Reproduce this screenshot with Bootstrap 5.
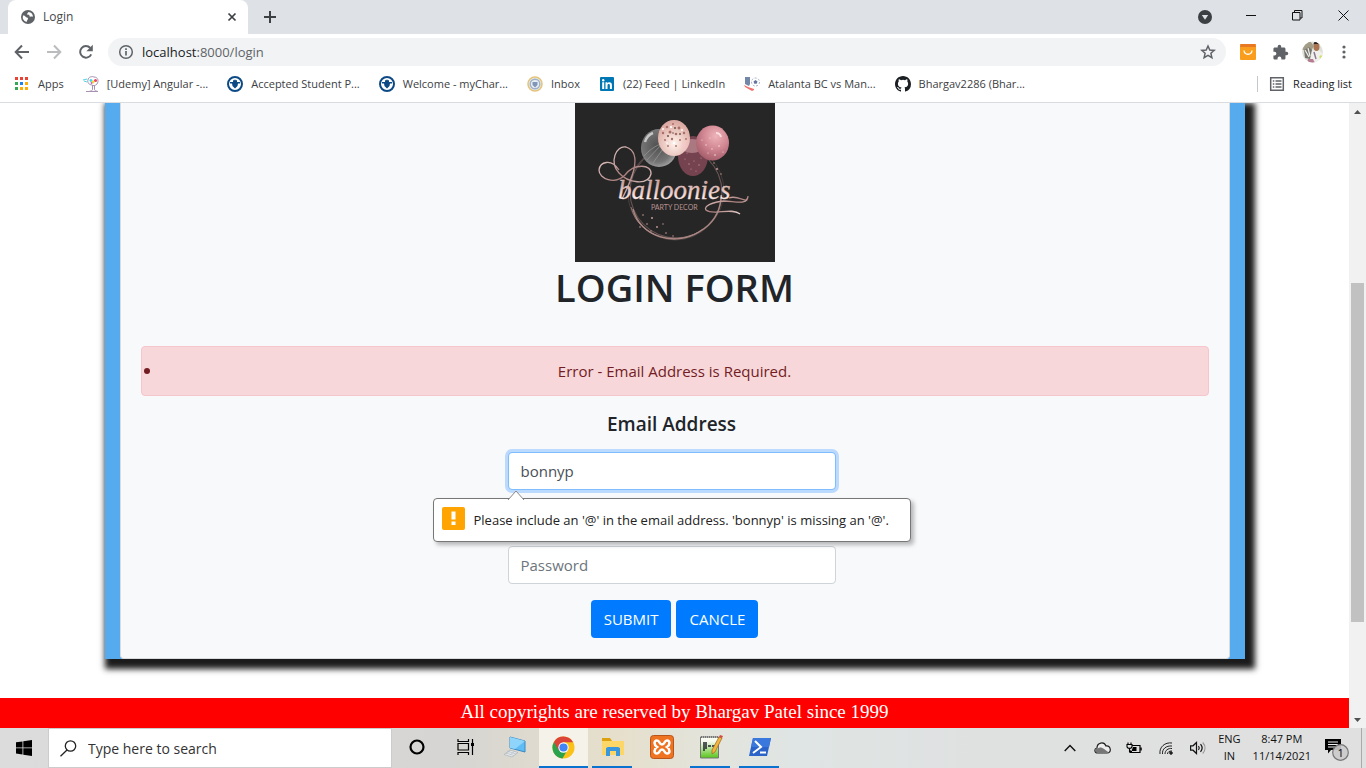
<!DOCTYPE html>
<html lang="en">
<head>
<meta charset="utf-8">
<meta name="viewport" content="width=device-width, initial-scale=1">
<title>Login</title>
<link href="https://cdn.jsdelivr.net/npm/bootstrap@5.3.0/dist/css/bootstrap.min.css" rel="stylesheet">
<style>
  body { font-family: "Open Sans", "Noto Sans", sans-serif; font-size: 15px; line-height: 24px; color: #212529; }
  svg { display: block; flex: none; }
  button.plain { border: 0; background: none; padding: 0; }

  /* browser frame */
  .tabstrip { background: #dee1e6; height: 34px; font-size: 12px; }
  .page-tab { width: 240px; margin-left: 8px; background: #fff; border-radius: 8px 8px 0 0; padding: 0 10px 0 13px; color: #45494d; }
  .caption-btn { width: 46px; height: 30px; display: grid; place-items: center; }
  .toolbar { height: 36px; padding: 0 6px; }
  .tool-btn { width: 32px; height: 32px; display: grid; place-items: center; }
  .omnibox { height: 28px; background: #f1f3f4; border-radius: 14px; padding: 0 10px; margin: 0 6px; }
  .url { font-size: 13px; color: #5f6368; text-decoration: none; }
  .url span { color: #202124; }
  .bookmarks { height: 33px; padding: 0 14px 5px; gap: 19px; border-bottom: 1px solid #dadce0; font-size: 11px; }
  .bookmarks a { color: #3c4043; text-decoration: none; display: flex; align-items: center; gap: 8px; white-space: nowrap; }
  .bookmarks .reading { border-left: 1px solid #c4c7cb; padding-left: 11px; color: #202124; height: 16px; }

  /* page */
  .page-view { min-height: 0; }
  .frame { background: #55abee; padding: 0 15px; box-shadow: 5px 5px 6px 5px #1b1b1b; }
  .login-card { background: #f8f9fb; border: 1px solid #d9dbde; border-top: 0; border-radius: 0 0 4px 4px; padding: 0 20px 20px; }
  .title { font-size: 38px; font-weight: 600; line-height: 48px; margin: 1px 0 35px; }
  .error-list { background: #f8d7da; border: 1px solid #f5c6cb; border-radius: 4px; color: #721c24; padding: 12px 0; margin: 0 0 16px; }
  .error-list .dot { width: 6px; height: 6px; border-radius: 50%; background: #721c24; margin: 0 -8px 0 2px; }
  .fields { padding-right: 6px; }
  .field-box { width: 328px; max-width: 100%; }
  .field-label { font-size: 19px; font-weight: 600; line-height: 24px; }
  .field-box .form-control { height: 38px; border-radius: 4px; border-color: #ced4da; color: #495057; font-size: 15px; }
  .field-box .form-control::placeholder { color: #6c757d; }
  .field-box .is-active { border-color: #80bdff; box-shadow: 0 0 0 3px #bbdafd; }
  .pass-gap { margin-top: 56px; }
  .btn-blue { background: #007bff; color: #fff; height: 38px; border-radius: 4px; font-size: 15px; padding: 0 13px; }
  .btn-row { gap: 5px; }
  .hint { position: absolute; top: 46px; left: 50%; transform: translateX(-50%); width: 478px; height: 44px; padding: 0 8px 4px; background: #fff; border: 1px solid #777; border-radius: 4px; box-shadow: 3px 3px 4px #0004; font-size: 13px; color: #222; white-space: nowrap; gap: 9px; z-index: 2; }
  .hint-arrow { position: absolute; left: 73px; top: -9px; }
  .copyright { background: #f00; color: #fff; font: 19px/28px "Liberation Serif", "Times New Roman", serif; margin-top: 39px; height: 30px; }

  .scrollbar { width: 17px; background: #f1f1f1; }
  .scrollbar .arrow { height: 17px; display: grid; place-items: center; }
  .thumb { background: #c1c1c1; width: 13px; flex: 339 1 0; }
  .track-above { flex: 163 1 0; }
  .track-below { flex: 89 1 0; }

  /* taskbar */
  .taskbar { height: 40px; background: linear-gradient(90deg, #dcdcdc 0, #d6d5d3 33%, #e6dfcb 45%, #e3e4dc 52%, #dfe5e4 58%, #dfe0e0 75%, #e0e0e0 100%); }
  .start { width: 48px; display: grid; place-items: center; }
  .search { width: 344px; background: #fff; border: 1px solid #ccc; padding-left: 11px; gap: 11px; }
  .search input { border: 0; outline: 0; font-size: 14px; color: #333; width: 240px; padding: 2px 0 0; }
  .search input::placeholder { color: #333; opacity: 1; }
  .task { width: 49px; display: grid; place-items: center; border: 0; background: none; padding: 0 0 2px; position: relative; }
  .task.open::after { content: ""; position: absolute; left: 4px; right: 5px; bottom: 0; height: 2px; background: #0a73d0; }
  .task.front { background: #f5f2ea; }
  .task.front::after { left: 0; right: 0; }
  .tray-btn { width: 32px; display: grid; place-items: center; }
  .tray-text { font-size: 11px; line-height: 17px; color: #111; text-align: center; padding-top: 2px; }
  .show-desktop { width: 5px; border-left: 1px solid #aaa; }
</style>
</head>
<body>
<div class="vh-100 d-flex flex-column overflow-hidden">

  <header>
    <div class="tabstrip d-flex">
      <div class="page-tab d-flex align-items-center">
        <svg width="14" height="14" viewBox="0 0 14 14"><circle cx="7" cy="7" r="7" fill="#5f6368"/><path d="M2 5.500c1.500 0 2 .3 2.600 1.300.6.900 2.200.5 2.400 1.700.1 1-.9 1.300-1 2.500-.1.800-.5 1-1 .8A5.500 5.500 0 0 1 2 5.500zM7.500 2c-.3 1-1.400 1-1.300 2 .1.900 1.500.4 2 .9.500.6 0 1.500.9 1.700 1 .2 2.200-.4 2.900.4a5.300 5.300 0 0 0-4.500-5z" fill="#fff"/></svg>
        <span class="ms-2">Login</span>
        <button class="plain ms-auto" aria-label="Close tab"><svg width="12" height="12" viewBox="0 0 12 12"><path d="M2.500 2.500l7 7M9.500 2.500l-7 7" stroke="#3c4043" stroke-width="1.700"/></svg></button>
      </div>
      <button class="plain ms-3" aria-label="New tab"><svg width="12" height="12" viewBox="0 0 12 12"><path d="M6 0v12M0 6h12" stroke="#3c4043" stroke-width="2"/></svg></button>
      <div class="ms-auto d-flex">
        <button class="plain me-3" aria-label="Search tabs"><svg width="14" height="14" viewBox="0 0 14 14"><circle cx="7" cy="7" r="7" fill="#3c4043"/><path d="M3.800 5h6.400L7 9.800z" fill="#dee1e6"/></svg></button>
        <button class="plain caption-btn" aria-label="Minimize"><svg width="10" height="10"><path d="M0 5.500h10" stroke="#111"/></svg></button>
        <button class="plain caption-btn" aria-label="Restore"><svg width="11" height="11"><path d="M.5 2.500h7.500v7.500H.5zM2.500 2.500V.5h7.500v7.500H8" fill="none" stroke="#111"/></svg></button>
        <button class="plain caption-btn" aria-label="Close"><svg width="11" height="11"><path d="M.5.5l10 10M10.500.5l-10 10" stroke="#111"/></svg></button>
      </div>
    </div>

    <div class="toolbar d-flex align-items-center">
      <button class="plain tool-btn" aria-label="Back"><svg width="16" height="16" viewBox="0 0 16 16" fill="none" stroke="#5f6368" stroke-width="2"><path d="M15 8H2M8 1.500L1.700 8 8 14.500"/></svg></button>
      <button class="plain tool-btn" aria-label="Forward"><svg width="16" height="16" viewBox="0 0 16 16" fill="none" stroke="#babcbe" stroke-width="2"><path d="M1 8h13M8 1.500L14.300 8 8 14.500"/></svg></button>
      <button class="plain tool-btn" aria-label="Reload"><svg width="16" height="16" viewBox="0 0 16 16"><path d="M13.200 10.300A5.800 5.800 0 1 1 12.300 4" fill="none" stroke="#5f6368" stroke-width="2"/><path d="M14.800.8v6.400H8.400z" fill="#5f6368"/></svg></button>
      <div class="omnibox flex-grow-1 d-flex align-items-center">
        <svg width="16" height="16" viewBox="0 0 16 16"><circle cx="8" cy="8" r="6.300" fill="none" stroke="#5f6368" stroke-width="1.500"/><path d="M8 7v4.500M8 4.300v1.700" stroke="#5f6368" stroke-width="1.700"/></svg>
        <a class="url ms-2" href="#"><span>localhost</span>:8000/login</a>
        <svg class="ms-auto" width="16" height="16" viewBox="0 0 16 16"><path d="M8 2l1.800 4 4.400.4-3.300 2.900 1 4.300L8 11.300l-3.900 2.300 1-4.300L1.800 6.400 6.200 6z" fill="none" stroke="#5f6368" stroke-width="1.500"/></svg>
      </div>
      <button class="plain tool-btn" aria-label="Shopping extension"><svg width="16" height="16" viewBox="0 0 16 16"><path d="M0 0h16v15a1 1 0 0 1-1 1H1a1 1 0 0 1-1-1z" fill="#f99d1c"/><path d="M1 0h14l1 3H0z" fill="#e87824"/><path d="M4 6.500c.5 5 7.500 5 8 0" fill="none" stroke="#fff" stroke-width="1.300"/></svg></button>
      <button class="plain tool-btn" aria-label="Extensions"><svg width="17" height="17" viewBox="0 0 24 24" fill="#5f6368"><path d="M20.500 11H19V7c0-1.100-.9-2-2-2h-4V3.500a2.500 2.500 0 0 0-5 0V5H4c-1.100 0-2 .9-2 2v3.800h1.500a2.700 2.700 0 0 1 0 5.400H2V20c0 1.100.9 2 2 2h3.800v-1.500a2.700 2.700 0 0 1 5.400 0V22H17c1.100 0 2-.9 2-2v-4h1.500a2.500 2.500 0 0 0 0-5z"/></svg></button>
      <button class="plain tool-btn" aria-label="Profile">
        <svg width="21" height="22" viewBox="0 0 21 22"><clipPath id="av"><circle cx="10.500" cy="11" r="10.400"/></clipPath><g clip-path="url(#av)"><path fill="#dfe0da" d="M0 0h21v22H0z"/><path fill="#a39c86" d="M0 3l8-3 4 5-3 5-9-1z"/><path d="M2 9l5-3 3 3-2 9-5-1z" fill="#77766c"/><path d="M3 9l4 7M6 7l2 8" stroke="#eee" stroke-width="1.200"/><path fill="#f2f0ec" d="M10 10l6-2 5 5v9H8z"/><ellipse cx="14.500" cy="6" rx="3" ry="4" fill="#a9744f"/><path d="M11.500 4c0-5 6-4 6 0l-1-1h-4z" fill="#2b211d"/><path d="M12 11l2 7" stroke="#8a7b94" stroke-width="1.500"/><circle cx="19" cy="16" r="1.700" fill="#cde06a"/><path d="M6 18h5l2 4H5z" fill="#b57c93"/></g></svg></button>
      <button class="plain tool-btn" aria-label="Menu"><svg width="4" height="14" fill="#5f6368"><circle cx="2" cy="2" r="1.600"/><circle cx="2" cy="7" r="1.600"/><circle cx="2" cy="12" r="1.600"/></svg></button>
    </div>

    <nav class="bookmarks d-flex align-items-center" aria-label="Bookmarks">
      <a href="#"><svg width="16" height="16" viewBox="0 0 16 16"><path fill="#ea4335" d="M1 1h3v3H1zM6 1h3v3H6zM11 1h3v3h-3z"/><path fill="#34a853" d="M1 6h3v3H1zM1 11h3v3H1z"/><path fill="#1a83f0" d="M6 6h3v3H6z"/><path fill="#fbaf05" d="M11 6h3v3h-3zM6 11h3v3H6zM11 11h3v3h-3z"/></svg>Apps</a>
      <a href="#"><svg width="16" height="16" viewBox="0 0 16 16"><path d="M5 4C5 1 9 0 11 1c4 0 5 4 3 7-2 2-4 2-5 1C6 9 4 6 5 4zM9.500 9v4.500c0 1-1 1.500-3 1.800M11.500 9v4.500c0 1 1 1.500 3 1.800M3 15.500h12" fill="none" stroke="#a791b0"/><circle cx="8" cy="4.500" r="1.500" fill="#48d7e6"/><circle cx="12.500" cy="4.500" r="1.600" fill="#ee4564"/><circle cx="10" cy="6" r="1.500" fill="#ffd836"/><circle cx="8.500" cy="7" r="1" fill="#bd65cf"/><path d="M0 4l4-1M1 5l3 1" stroke="#48d7e6"/></svg>[Udemy] Angular -...</a>
      <a href="#"><svg width="16" height="16" viewBox="0 0 16 16"><circle cx="8" cy="8" r="7" fill="#fff" stroke="#0d4a85" stroke-width="2"/><path d="M3 6h3V4.300h1.300L8 3.200l.7 1.100H10V6h3v1.500h-2L10.500 10 8 12.500 5.500 10 5 7.500H3z" fill="#0d4a85"/></svg>Accepted Student P...</a>
      <a href="#"><svg width="16" height="16" viewBox="0 0 16 16"><circle cx="8" cy="8" r="7" fill="#fff" stroke="#0d4a85" stroke-width="2"/><path d="M3 6h3V4.300h1.300L8 3.200l.7 1.100H10V6h3v1.500h-2L10.500 10 8 12.500 5.500 10 5 7.500H3z" fill="#0d4a85"/></svg>Welcome - myChar...</a>
      <a href="#"><svg width="16" height="16" viewBox="0 0 16 16"><circle cx="8" cy="8" r="7" fill="#e8edf2" stroke="#e5c47a" stroke-width="1.600"/><circle cx="8" cy="8" r="4.800" fill="none" stroke="#9fb1ca" stroke-width="1.400"/><path d="M5.500 6h5v3L8 11.500 5.500 9z" fill="#8096b8"/></svg>Inbox</a>
      <a href="#"><svg width="16" height="16" viewBox="0 0 16 16"><rect x="1" y="1" width="14" height="14" rx="1" fill="#0077b5"/><path d="M3.200 6.300h2V13h-2zM6.500 6.300h1.900v1c.9-1.700 4.500-1.600 4.500 1.500V13h-2V9.400c0-2-2.400-1.900-2.400 0V13h-2z" fill="#fff"/><circle cx="4.200" cy="4.200" r="1.200" fill="#fff"/></svg>(22) Feed | LinkedIn</a>
      <a href="#"><svg width="16" height="16" viewBox="0 0 16 16"><path d="M1 1h5v7l-1 2-4-2z" fill="#7387a8"/><path d="M0 9l4 2 6 2v1l-2 1-7-4z" fill="#f0706c"/><circle cx="11.500" cy="6" r="4" fill="none" stroke="#a4aec5" stroke-dasharray="2 1.500"/><path d="M11.500 4l2 1.500-.8 2.300h-2.400L9.500 5.500z" fill="#63759c"/></svg>Atalanta BC vs Man...</a>
      <a href="#"><svg width="16" height="16" viewBox="0 0 16 16"><path fill="#1b1f23" d="M8 0C3.580 0 0 3.580 0 8c0 3.540 2.290 6.530 5.470 7.590.4.070.55-.17.55-.38 0-.19-.01-.82-.01-1.490-2.010.37-2.530-.49-2.690-.94-.09-.23-.48-.94-.82-1.130-.28-.15-.68-.52-.01-.53.63-.01 1.080.58 1.230.82.720 1.210 1.870.87 2.330.66.070-.52.280-.87.510-1.070-1.780-.2-3.640-.89-3.640-3.950 0-.87.310-1.590.82-2.150-.08-.2-.36-1.020.080-2.120 0 0 .67-.21 2.200.82a7.600 7.600 0 0 1 4 0c1.530-1.040 2.200-.82 2.200-.82.440 1.100.16 1.920.080 2.120.510.560.82 1.270.82 2.150 0 3.070-1.870 3.750-3.650 3.950.29.250.54.730.54 1.480 0 1.070-.01 1.930-.01 2.200 0 .21.150.46.550.38A8 8 0 0 0 16 8c0-4.420-3.580-8-8-8z"/></svg>Bhargav2286 (Bhar...</a>
      <a class="reading ms-auto" href="#"><svg width="16" height="16" viewBox="0 0 16 16" fill="none" stroke="#5f6368" stroke-width="1.500"><path d="M1.700 1.700h12.600v12.600H1.700zM3.800 5h1.500M6.500 5h6M3.800 8h1.500M6.500 8h6M3.800 11h1.500M6.500 11h6"/></svg>Reading list</a>
    </nav>
  </header>

  <div class="page-view flex-grow-1 d-flex bg-white">
    <main class="flex-grow-1 overflow-hidden">
      <div class="container frame">
        <div class="login-card text-center">
          <svg class="mx-auto" width="200" height="159" viewBox="0 0 200 159" role="img" aria-label="Balloonies party decor">
            <defs>
              <linearGradient id="rose" x1="0" y1="0" x2="1" y2="1"><stop offset="0" stop-color="#f6dfdc"/><stop offset=".5" stop-color="#a87d7b"/><stop offset="1" stop-color="#fae9e6"/></linearGradient>
              <linearGradient id="script" x1="0" y1="0" x2="0" y2="1"><stop offset="0.2" stop-color="#c49a98"/><stop offset=".55" stop-color="#e8c9c5"/><stop offset=".8" stop-color="#fff4f0"/></linearGradient>
              <radialGradient id="pink" cx=".6" cy=".3" r=".7"><stop offset="0" stop-color="#efb3b9"/><stop offset=".5" stop-color="#d38a95"/><stop offset="1" stop-color="#a9606e"/></radialGradient>
              <radialGradient id="clear" cx=".45" cy=".45" r=".6"><stop offset="0" stop-color="#505050"/><stop offset=".7" stop-color="#747474"/><stop offset="1" stop-color="#aaa8a8"/></radialGradient>
              <radialGradient id="shine" cx=".5" cy=".65" r=".6"><stop offset="0" stop-color="#fff3ec"/><stop offset="1" stop-color="#dcaaa2"/></radialGradient>
            </defs>
            <path fill="#262626" d="M0 0h200v159H0z"/>
            <g fill="none" stroke="#8d6d6c" stroke-width=".7"><circle cx="101" cy="89" r="46" opacity=".8"/><circle cx="100" cy="90" r="47" opacity=".5"/><circle cx="102" cy="88" r="47" opacity=".4"/><path d="M58 106c7 28 42 38 66 23 14-8 21-20 22-34" stroke="#a98682" stroke-width="1.400"/><path d="M56 104c8 32 48 40 72 22" stroke="#b08d89"/></g>
            <ellipse cx="118" cy="53" rx="15" ry="20" fill="#75434f"/>
            <g fill="#c58d98"><circle cx="110" cy="56" r=".6"/><circle cx="114" cy="61" r=".7"/><circle cx="119" cy="58" r=".6"/><circle cx="124" cy="62" r=".7"/><circle cx="116" cy="66" r=".6"/><circle cx="121" cy="68" r=".6"/><circle cx="126" cy="55" r=".6"/><circle cx="112" cy="50" r=".6"/></g>
            <ellipse cx="84" cy="45" rx="18" ry="19" fill="url(#clear)"/><path d="M70 39q2-7 8-9" stroke="#ddd" stroke-width="2.500" fill="none" opacity=".8"/><path d="M69 53c10-11 19-14 31-15M72 57l14-15M78 60l12-17" stroke="#999" stroke-width=".7" fill="none"/>
            <ellipse cx="99" cy="35" rx="16" ry="18" fill="url(#shine)"/>
            <g fill="#a86f68"><circle cx="92" cy="24" r="1.300"/><circle cx="98" cy="21" r="1"/><circle cx="104" cy="25" r="1.400"/><circle cx="88" cy="30" r="1.200"/><circle cx="95" cy="29" r="1.500"/><circle cx="101" cy="31" r="1.300"/><circle cx="109" cy="30" r="1.200"/><circle cx="90" cy="37" r="1"/><circle cx="97" cy="36" r="1.200"/><circle cx="105" cy="37" r="1"/><circle cx="93" cy="43" r=".9"/><circle cx="101" cy="43" r=".9"/><circle cx="111" cy="36" r=".9"/></g>
            <g fill="#6e4f47"><circle cx="100" cy="25" r="1"/><circle cx="93" cy="33" r="1"/><circle cx="105" cy="31" r=".9"/><circle cx="98" cy="30" r=".8"/></g>
            <g fill="#fff"><circle cx="96" cy="24" r="1.100"/><circle cx="88" cy="26" r=".9"/><circle cx="107" cy="27" r=".9"/><circle cx="99" cy="40" r="1.200"/><circle cx="92" cy="40" r=".8"/></g>
            <ellipse cx="117" cy="43" rx="11" ry="7" fill="#f9c9cb" opacity=".4"/>
            <ellipse cx="137.500" cy="40" rx="16.500" ry="17.500" fill="url(#pink)"/>
            <g fill="#fbdcdc"><circle cx="131" cy="42" r=".7"/><circle cx="137" cy="46" r=".7"/><circle cx="144" cy="43" r=".8"/><circle cx="148" cy="49" r=".6"/><circle cx="140" cy="52" r=".8"/><circle cx="133" cy="50" r=".6"/><circle cx="127" cy="37" r=".6"/><circle cx="135" cy="35" r=".6"/></g><path d="M141 30q4 0 5 4" stroke="#fbdede" stroke-width="2" fill="none"/>
            <g fill="none" stroke="url(#rose)" stroke-width="1.300"><path d="M47 96C54 82 70 50 51 44c-10-2-17 15-7 26 9 10 29 13 32 1 1-10-17-11-26 1C40 82 24 76 24 67c1-8 12-12 20 0"/><path d="M154 95c10-4 18 8 19-2 0 10-14 5-24 5-11 1-21 5-18 9 7 6 26-3 34 4"/></g>
            <text x="43" y="96" font-family="'Liberation Serif', serif" font-style="italic" font-size="27" fill="url(#script)" stroke="#ead0cc" stroke-width=".3">balloonies</text>
            <text x="76" y="107" font-family="Lato, sans-serif" font-size="7" fill="#b89390">PARTY DECOR</text>
            <g fill="#c79d98"><circle cx="68" cy="112" r=".8"/><circle cx="77" cy="115" r="1"/><circle cx="72" cy="121" r=".8"/><circle cx="82" cy="124" r=".9"/><circle cx="88" cy="121" r=".7"/><circle cx="65" cy="124" r=".8"/><circle cx="91" cy="130" r=".8"/><circle cx="98" cy="133" r=".7"/><circle cx="142" cy="66" r="1"/><circle cx="146" cy="71" r=".7"/><circle cx="139" cy="60" r=".7"/><circle cx="76" cy="128" r=".7"/></g>
          </svg>
          <h1 class="title">LOGIN FORM</h1>
          <ul class="error-list list-unstyled" role="alert">
            <li class="d-flex align-items-center"><span class="dot"></span><span class="flex-grow-1">Error - Email Address is Required.</span></li>
          </ul>
          <form novalidate>
            <div class="fields">
              <label class="field-label d-block mb-3" for="email">Email Address</label>
              <div class="field-box position-relative mx-auto">
                <input class="form-control is-active" type="email" id="email" value="bonnyp">
                <div class="hint d-flex align-items-center" role="status">
                  <svg class="hint-arrow" width="18" height="10" viewBox="0 0 18 10"><path d="M1 10L9 1l8 9" fill="#fff" stroke="#888"/></svg>
                  <svg width="23" height="23" viewBox="0 0 23 23"><rect width="23" height="23" rx="2" fill="#ffa400"/><path d="M9.500 4.500h4v8h-4zM9.500 14.500h4v3.500h-4z" fill="#fff"/></svg>
                  <span class="pt-1">Please include an '@' in the email address. 'bonnyp' is missing an '@'.</span>
                </div>
              </div>
              <div class="field-box pass-gap mx-auto">
                <input class="form-control" type="password" id="password" placeholder="Password" aria-label="Password">
              </div>
            </div>
            <div class="btn-row d-flex justify-content-center mt-3">
              <button type="button" class="btn btn-blue border-0">SUBMIT</button>
              <button type="button" class="btn btn-blue border-0">CANCLE</button>
            </div>
          </form>
        </div>
      </div>
      <footer class="copyright text-center">All copyrights are reserved by Bhargav Patel since 1999</footer>
    </main>
    <div class="scrollbar d-flex flex-column align-items-center" aria-hidden="true">
      <div class="arrow"><svg width="7" height="4"><path d="M0 4l3.500-4L7 4z" fill="#505050"/></svg></div>
      <div class="track-above"></div>
      <div class="thumb"></div>
      <div class="track-below"></div>
      <div class="arrow"><svg width="7" height="4"><path d="M0 0l3.500 4L7 0z" fill="#505050"/></svg></div>
    </div>
  </div>

  <div class="taskbar d-flex align-items-stretch">
    <button class="plain start" aria-label="Start"><svg width="16" height="16" viewBox="0 0 16 16"><path d="M0 2.300L6.500 1.400v6.100H0zM7.300 1.300L16 0v7.500H7.300zM0 8.300h6.500v6.200L0 13.600zM7.300 8.300H16V16l-8.700-1.300z"/></svg></button>
    <label class="search d-flex align-items-center">
      <svg width="17" height="17" viewBox="0 0 17 17" fill="none" stroke="#222" stroke-width="1.300"><circle cx="10.500" cy="6" r="5.200"/><path d="M7 10L.5 16.300"/></svg>
      <input type="text" placeholder="Type here to search" aria-label="Search">
    </label>
    <button class="task" aria-label="Cortana"><svg width="16" height="16"><circle cx="8" cy="8" r="6.500" fill="none" stroke="#000" stroke-width="2.200"/></svg></button>
    <button class="task" aria-label="Task view"><svg width="17" height="16" viewBox="0 0 17 16"><path d="M1 0v2.500h10.500V0M1 16v-2.500h10.500V16M1 4.500h10.500v6.500H1zM15.500 0v4M15.500 7v9" fill="none" stroke="#000" stroke-width="1.200"/><path d="M14 4h3v3h-3z"/></svg></button>
    <button class="task" aria-label="Computer"><svg width="24" height="22" viewBox="0 0 24 22"><path d="M7 1l15 4v11L7 12z" fill="#5fbdf5" stroke="#3a89c4"/><path d="M7 1l15 4-10 8-5-1z" fill="#8fd5fb"/><path d="M7 14l8 2.500-6 4.500-8-2.500z" fill="#e4e8ea" stroke="#a9b3ba" stroke-width=".7"/><path d="M4 15l9 3M3 17l8 2.500M8 14l-5 4M12 15l-5 4" stroke="#b3bcc3" stroke-width=".6"/></svg></button>
    <button class="task front open" aria-label="Chrome"><svg width="23" height="23" viewBox="0 0 24 24"><circle cx="12" cy="12" r="11.500" fill="#fbc116"/><path d="M12 12L2 6.300A11.500 11.500 0 0 0 11 23.500l5-9z" fill="#2ba24c"/><path d="M12 12V6.500h10A11.500 11.500 0 0 0 2 6.300l5 8.500z" fill="#dc4437"/><circle cx="12" cy="12" r="5.400" fill="#fff"/><circle cx="12" cy="12" r="4.300" fill="#4285f4"/></svg></button>
    <button class="task open" aria-label="File Explorer"><svg width="22" height="20" viewBox="0 0 22 20"><path d="M0 1h8l2 3h11v14H0z" fill="#dca10f"/><path d="M0 4h22v14H0z" fill="#fcd667"/><path d="M4 19v-8l2-1h10l2 1v8h-4v-5H8v5z" fill="#3a96dd"/></svg></button>
    <button class="task" aria-label="XAMPP"><svg width="24" height="24" viewBox="0 0 24 24"><rect x=".5" y=".5" width="23" height="23" rx="3" fill="#ef7422" stroke="#b9541a"/><path d="M7 5.500c3 0 2 4 5 4s2-4 5-4c3.500 0 3 4.500 0 6.500 3 2 3.500 6.500 0 6.500-3 0-2-4-5-4s-2 4-5 4c-3.500 0-3-4.500 0-6.500-3-2-3.500-6.500 0-6.500z" fill="none" stroke="#fff" stroke-width="2.600"/></svg></button>
    <button class="task open" aria-label="Notepad++"><svg width="24" height="24" viewBox="0 0 24 24"><defs><linearGradient id="np" x1="0" y1="0" x2="0" y2="1"><stop offset=".2" stop-color="#f7fbf0"/><stop offset="1" stop-color="#58c51a"/></linearGradient></defs><path d="M1.500 2h18v21h-18z" fill="url(#np)" stroke="#777"/><path d="M2 2h17" stroke="#777" stroke-width="2" stroke-dasharray="1 1"/><path d="M5 7v9M7 7v7M9 11h3M13 11h3" stroke="#223" stroke-width="1.500"/><path d="M20 2l3 1-7 14-3 2v-4z" fill="#f3b53d" stroke="#9a6523" stroke-width=".7"/><path d="M20 2l1-2 3 1-1 2z" fill="#d84a3e"/></svg></button>
    <button class="task open" aria-label="PowerShell"><svg width="24" height="20" viewBox="0 0 24 20"><path d="M5 1h18l-4 18H1z" fill="#2b63c9"/><path d="M5 1h18l-2 9H3z" fill="#3b78dd"/><path d="M7 4l6 6-8 6M12 15.500h6" fill="none" stroke="#fff" stroke-width="2"/></svg></button>

    <div class="ms-auto d-flex">
      <button class="plain tray-btn" aria-label="Hidden icons"><svg width="12" height="8"><path d="M.7 7L6 1.500 11.300 7" fill="none" stroke="#111" stroke-width="1.400"/></svg></button>
      <button class="plain tray-btn" aria-label="OneDrive"><svg width="17" height="12" viewBox="0 0 17 12"><path d="M4 11C0 11 0 6.500 3 6 3 .5 10-1 12 4c5-.5 6 7 1 7z" fill="#eee" stroke="#222" stroke-width="1.200"/><path d="M3.500 11.200C0 10 1 6.500 4 6.300c3-2 5 0 11 4.200z" fill="#777"/></svg></button>
      <button class="plain tray-btn" aria-label="Battery"><svg width="16" height="12" viewBox="0 0 16 12"><path d="M6 3.500h8v7H4V8" fill="none" stroke="#000" stroke-width="1.200"/><path d="M15 5.500v3" stroke="#000" stroke-width="1.500"/><path d="M7 5h3.500v4H5.500z"/><path d="M1 2.500h5v2C6 7 1 7 1 4.500zM2 .5v2M5 .5v2M3.500 6v3.500H6" fill="none" stroke="#000" stroke-width="1.100"/></svg></button>
      <button class="plain tray-btn" aria-label="Network"><svg width="14" height="14" viewBox="0 0 14 14" fill="none" stroke="#222"><path d="M1 13C0 6 6 1 13 2M3.500 13C3 8 7 4.500 13 5M6 13c0-3.500 3-6 7-5.500M8.500 13c0-2 2-3.200 4.500-3"/><circle cx="12" cy="12" r="1.300" fill="#222"/></svg></button>
      <button class="plain tray-btn" aria-label="Volume"><svg width="16" height="14" viewBox="0 0 16 14" fill="none" stroke="#111" stroke-width="1.200"><path d="M.6 4.800h2.400L6.500 1.500v11L3 9.200H.6zM8.500 5c1 1.300 1 2.700 0 4M10.500 3.200c2 2.300 2 5.300 0 7.600"/><path d="M12.700 1.500c3 3.300 3 7.700 0 11" stroke="#999"/></svg></button>
      <div class="tray-text px-1 me-1">ENG<br>IN</div>
      <div class="tray-text px-1">8:47 PM<br>11/14/2021</div>
      <button class="plain px-2 me-1" aria-label="Notifications"><svg width="26" height="26" viewBox="0 0 26 26"><path d="M2 4h16v11H8l-3 3.500V15H2z"/><path d="M5 7h10M5 9.500h10M5 12h8" stroke="#eee"/><circle cx="17.500" cy="17.500" r="7.800" fill="#cbcbcb" fill-opacity=".9" stroke="#777" stroke-width="1.200"/><text x="14.500" y="21.500" font-size="11" font-family="Open Sans, sans-serif">1</text></svg></button>
      <div class="show-desktop"></div>
    </div>
  </div>
</div>
<script src="https://cdn.jsdelivr.net/npm/bootstrap@5.3.0/dist/js/bootstrap.bundle.min.js"></script>
</body>
</html>
